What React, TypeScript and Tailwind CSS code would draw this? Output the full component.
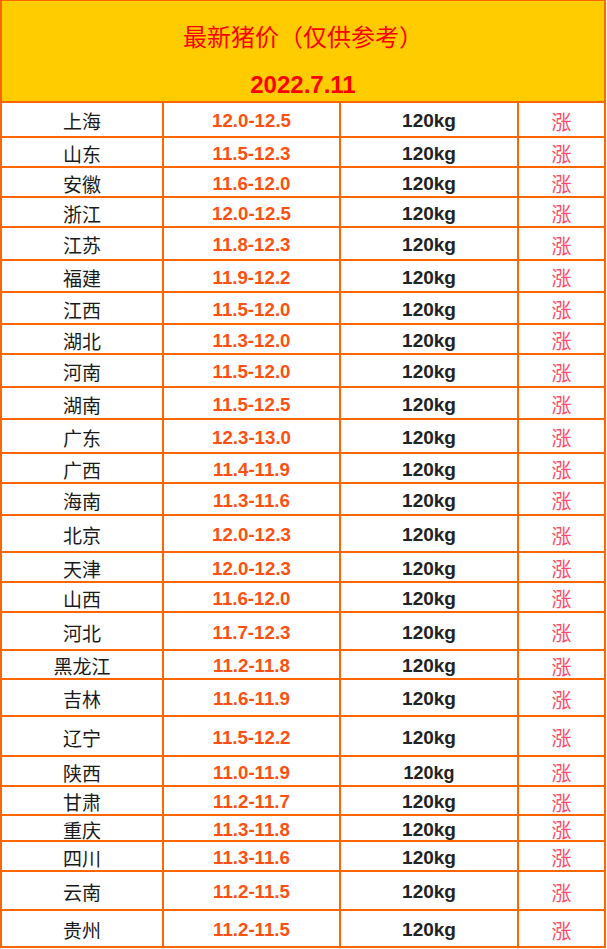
import React from "react";

type Row = { name: string; price: string; h: number; small?: boolean };

const rows: Row[] = [
  { name: "上海", price: "12.0-12.5", h: 33 },
  { name: "山东", price: "11.5-12.3", h: 28 },
  { name: "安徽", price: "11.6-12.0", h: 28 },
  { name: "浙江", price: "12.0-12.5", h: 28 },
  { name: "江苏", price: "11.8-12.3", h: 31 },
  { name: "福建", price: "11.9-12.2", h: 30 },
  { name: "江西", price: "11.5-12.0", h: 30 },
  { name: "湖北", price: "11.3-12.0", h: 28 },
  { name: "河南", price: "11.5-12.0", h: 31 },
  { name: "湖南", price: "11.5-12.5", h: 30 },
  { name: "广东", price: "12.3-13.0", h: 32 },
  { name: "广西", price: "11.4-11.9", h: 28 },
  { name: "海南", price: "11.3-11.6", h: 30 },
  { name: "北京", price: "12.0-12.3", h: 35 },
  { name: "天津", price: "12.0-12.3", h: 28 },
  { name: "山西", price: "11.6-12.0", h: 28 },
  { name: "河北", price: "11.7-12.3", h: 36 },
  { name: "黑龙江", price: "11.2-11.8", h: 27 },
  { name: "吉林", price: "11.6-11.9", h: 35 },
  { name: "辽宁", price: "11.5-12.2", h: 38 },
  { name: "陕西", price: "11.0-11.9", h: 28, small: true },
  { name: "甘肃", price: "11.2-11.7", h: 27 },
  { name: "重庆", price: "11.3-11.8", h: 24 },
  { name: "四川", price: "11.3-11.6", h: 28 },
  { name: "云南", price: "11.2-11.5", h: 37 },
  { name: "贵州", price: "11.2-11.5", h: 35 },
];

export default function App() {
  return (
    <div className="bg-white w-[607px] h-[949px]">
      <div className="w-[606px] border-2 border-t border-[#ff6600]">
        <div className="h-[100px] bg-[#ffcc00] flex flex-col items-center pt-[20px]">
          <div className="text-[24px] leading-[30px] text-[#ff0000] font-['Noto_Sans_CJK_SC',sans-serif]">
            最新猪价（仅供参考）
          </div>
          <div className="mt-[19px] text-[24px] leading-[30px] font-bold text-[#ff0000] font-['Liberation_Sans',Arial,sans-serif]">
            2022.7.11
          </div>
        </div>
        {rows.map((r) => (
          <div
            key={r.name}
            className="flex border-t-2 border-[#ff6600]"
            style={{ height: r.h + 2 }}
          >
            <div className="w-[160px] pt-[4px] flex items-center justify-center text-[19px] text-[#1a1a1a] font-['Noto_Sans_CJK_SC',sans-serif]">
              {r.name}
            </div>
            <div className="w-[177px] pt-[4px] border-l-2 border-[#ff6600] flex items-center justify-center text-[18.7px] font-bold text-[#ff5010] font-['Liberation_Sans',Arial,sans-serif]">
              {r.price}
            </div>
            <div
              className={
                r.small
                  ? "w-[178px] pt-[4px] border-l-2 border-[#ff6600] flex items-center justify-center text-[18px] font-bold text-[#222222] font-['Liberation_Sans',Arial,sans-serif]"
                  : "w-[178px] pt-[4px] border-l-2 border-[#ff6600] flex items-center justify-center text-[19px] font-bold text-[#222222] font-['Liberation_Sans',Arial,sans-serif]"
              }
            >
              120kg
            </div>
            <div className="w-[87px] pt-[4px] border-l-2 border-[#ff6600] flex items-center justify-center text-[20px] text-[#ff4d6a] font-['Noto_Sans_CJK_SC',sans-serif]">
              涨
            </div>
          </div>
        ))}
      </div>
    </div>
  );
}
